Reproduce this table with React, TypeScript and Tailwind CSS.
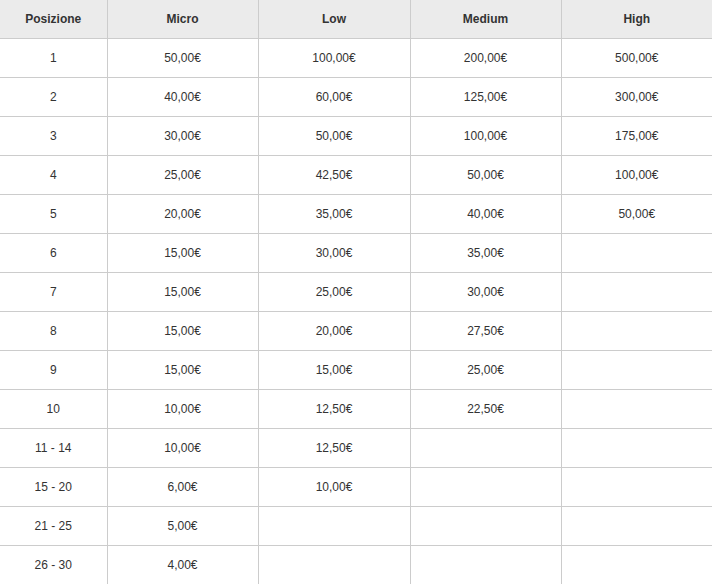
const headers = ["Posizione", "Micro", "Low", "Medium", "High"];

const rows: string[][] = [
  ["1", "50,00€", "100,00€", "200,00€", "500,00€"],
  ["2", "40,00€", "60,00€", "125,00€", "300,00€"],
  ["3", "30,00€", "50,00€", "100,00€", "175,00€"],
  ["4", "25,00€", "42,50€", "50,00€", "100,00€"],
  ["5", "20,00€", "35,00€", "40,00€", "50,00€"],
  ["6", "15,00€", "30,00€", "35,00€", ""],
  ["7", "15,00€", "25,00€", "30,00€", ""],
  ["8", "15,00€", "20,00€", "27,50€", ""],
  ["9", "15,00€", "15,00€", "25,00€", ""],
  ["10", "10,00€", "12,50€", "22,50€", ""],
  ["11 - 14", "10,00€", "12,50€", "", ""],
  ["15 - 20", "6,00€", "10,00€", "", ""],
  ["21 - 25", "5,00€", "", "", ""],
  ["26 - 30", "4,00€", "", "", ""],
];

const App = () => {
  return (
    <div className="w-[712px] h-[584px] overflow-hidden bg-white">
      <table
        className="w-[712px] table-fixed border-collapse text-[12px] text-[#333]"
        style={{ fontFamily: '"Liberation Sans", Arial, sans-serif' }}
      >
        <colgroup>
          <col className="w-[107px]" />
          <col className="w-[151px]" />
          <col className="w-[152px]" />
          <col className="w-[151px]" />
          <col className="w-[151px]" />
        </colgroup>
        <thead className="bg-[#ebebeb]">
          <tr className="h-[38px]">
            {headers.map((h, i) => (
              <th
                key={h}
                className={`p-0 text-center font-bold border-b border-[#cccccc] ${
                  i < headers.length - 1 ? "border-r" : ""
                }`}
              >
                {h}
              </th>
            ))}
          </tr>
        </thead>
        <tbody>
          {rows.map((r) => (
            <tr className="h-[39px]" key={r[0]}>
              {r.map((cell, i) => (
                <td
                  key={i}
                  className={`p-0 text-center border-b border-[#cccccc] ${
                    i < r.length - 1 ? "border-r" : ""
                  }`}
                >
                  {cell}
                </td>
              ))}
            </tr>
          ))}
        </tbody>
      </table>
    </div>
  );
};

export default App;
